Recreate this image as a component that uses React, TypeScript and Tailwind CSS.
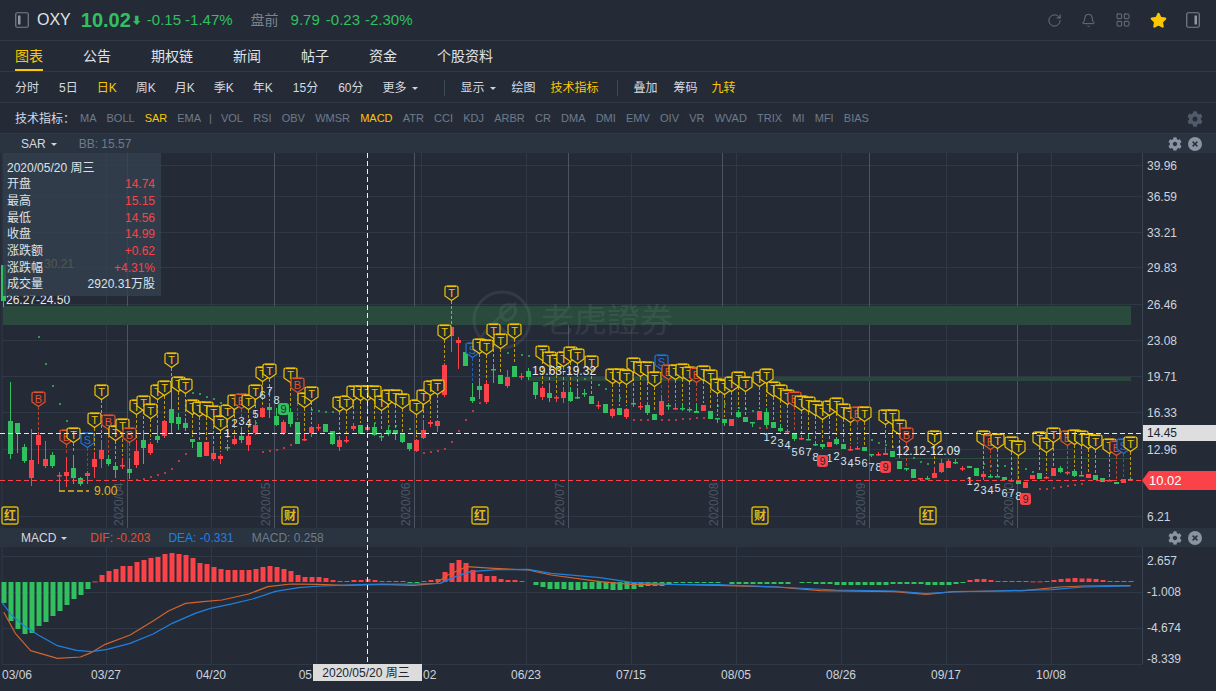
import { Bell, LayoutGrid, RotateCw, Star } from "lucide-react"
import { FaCog } from "react-icons/fa"

const FONT = "'Liberation Sans','Noto Sans CJK SC',sans-serif"
const RED = "#fb4248"
const GREEN = "#31c05f"

// [green, bodyTop, bodyBottom, wickTop, wickBottom], one per trading day, x = 10 + 7i
const candles: number[][] = [
    [1,421,454,382,459],[1,423,433,423,453],[1,447,461,444,463],[0,460,478,429,486],[0,435,445,432,464],[0,459,466,441,468],[1,455,466,452,468],[0,475,475,472,491],[0,472,476,457,487],[1,468,478,455,484],
    [1,478,484,477,486],[0,473,476,471,484],[0,459,467,452,478],[0,450,459,440,468],[1,459,464,455,466],[1,466,470,462,478],[0,465,465,458,469],[1,469,473,458,479],[0,451,465,440,468],[1,440,448,430,464],
    [0,444,453,442,455],[1,436,440,425,443],[0,421,436,420,438],[1,409,423,383,434],[1,417,424,413,430],[1,423,428,418,431],[1,439,442,439,448],[1,442,457,442,457],[0,442,456,442,456],[0,453,459,446,461],
    [0,456,459,454,464],[1,447,447,444,451],[0,439,444,435,445],[1,436,440,427,443],[0,436,445,434,451],[0,425,433,420,435],[0,408,417,407,418],[1,407,410,403,418],[1,416,425,408,426],[0,422,433,420,435],
    [1,412,424,408,427],[1,422,444,422,444],[0,439,439,433,441],[0,427,433,426,437],[0,427,427,424,431],[1,424,432,424,432],[1,431,444,431,445],[0,440,447,436,451],[0,440,440,436,443],[0,426,429,423,431],
    [1,425,434,425,434],[0,427,430,423,432],[1,427,435,423,436],[1,436,436,433,441],[1,430,434,427,436],[1,430,434,430,440],[1,434,442,434,443],[1,443,449,443,451],[0,440,451,439,452],[0,430,438,420,439],
    [0,422,424,420,427],[0,421,426,420,432],[0,365,395,363,397],[0,327,336,327,352],[0,340,343,337,369],[1,352,366,352,366],[1,397,401,383,403],[1,386,390,378,399],[0,384,402,380,404],[1,369,369,364,383],
    [1,375,384,375,384],[0,377,386,370,388],[1,366,377,366,377],[0,376,376,373,380],[1,371,377,368,380],[1,382,395,382,399],[0,388,397,386,400],[1,393,398,383,402],[0,397,397,395,402],[0,392,398,387,403],
    [1,392,401,387,402],[1,397,397,388,399],[1,393,393,389,397],[1,396,404,396,404],[0,405,405,401,409],[1,404,413,404,413],[0,409,416,408,418],[1,408,415,408,415],[0,409,417,408,419],[1,403,403,398,407],
    [0,406,406,402,410],[1,405,413,402,415],[1,414,420,414,420],[0,401,415,395,416],[1,405,405,403,410],[0,408,408,403,410],[1,408,408,403,411],[1,409,409,407,412],[1,411,413,403,413],[0,405,411,405,411],
    [1,411,419,411,419],[1,418,418,418,423],[1,419,423,419,426],[0,419,426,419,426],[1,412,417,410,418],[1,417,422,417,422],[1,422,422,422,427],[0,411,420,411,420],[1,412,425,408,427],[1,422,428,422,428],
    [1,428,431,424,432],[0,431,431,429,433],[1,433,439,433,441],[0,438,438,435,440],[1,439,439,433,440],[1,444,444,441,446],[1,444,447,444,449],[0,442,447,442,447],[1,439,444,437,445],[1,444,449,444,449],
    [0,449,449,446,451],[0,448,448,446,450],[1,447,451,447,451],[1,454,454,454,457],[0,454,454,452,456],[0,453,455,447,455],[1,451,457,451,457],[1,461,469,461,469],[1,468,468,468,471],[1,469,478,469,478],
    [0,478,478,478,481],[1,478,478,476,480],[0,473,478,467,478],[0,463,472,459,473],[0,461,468,459,468],[1,462,462,459,464],[0,468,468,466,471],[1,466,468,466,468],[1,468,476,468,476],[0,474,477,471,480],
    [1,476,476,474,478],[1,476,476,474,477],[1,477,480,477,480],[0,480,480,478,482],[1,481,484,481,484],[0,482,488,482,488],[0,475,479,475,479],[1,473,479,473,479],[0,477,477,476,479],[0,468,476,468,476],
    [1,468,472,466,473],[0,472,472,471,475],[1,471,476,469,477],[1,475,475,471,476],[0,474,478,474,478],[1,475,480,475,480],[1,478,482,478,482],[0,480,480,479,481],[1,482,484,482,484],[0,479,483,479,483],
    [1,479,479,477,480],
]

type Mark = [string, number, number]
const marks: Mark[] = [
    ["B",38,399],["B",66,437],["T",73,435],["S",87,440],["T",94,420],["T",101,392],["B",108,422],["T",115,433],["T",122,426],["B",129,435],["T",136,407],["T",143,403],["T",150,411],["T",157,392],["T",164,388],["T",171,360],["T",178,384],["T",185,386],["T",192,407],["T",199,409],["T",206,409],["T",213,413],["T",220,423],["T",227,412],["T",234,402],["B",241,401],["T",248,402],["T",255,392],["T",262,374],["T",269,371],["T",290,375],["B",297,385],
    ["T",304,400],["T",311,394],["T",339,404],["T",346,403],["T",353,393],["T",360,393],["T",367,393],["T",374,393],["T",381,403],["T",388,397],["T",395,397],["T",402,401],["T",416,407],["T",423,397],["T",430,388],["T",437,387],["T",444,332],["T",451,293],["S",472,350],["T",479,346],["T",486,347],["T",493,331],["T",500,341],["T",514,331],["T",542,353],["T",549,359],["T",556,362],["T",563,359],["T",570,354],["T",577,356],["T",591,363],
    ["T",612,376],["T",619,376],["T",626,377],["T",633,365],["T",640,369],["T",647,369],["T",654,379],["S",661,362],["B",668,372],["T",675,372],["T",682,371],["T",689,374],["B",696,375],["T",703,373],["T",710,377],["T",717,386],["T",724,387],["T",731,384],["T",738,379],["T",745,384],["T",759,379],["T",766,376],["T",773,389],["T",780,392],["T",787,397],["B",794,399],["T",801,403],["T",808,404],["T",815,408],["T",822,412],["T",829,408],["T",836,405],["T",843,411],["T",850,415],["B",857,414],["T",864,414],["T",885,417],["T",892,417],["T",899,427],["B",906,435],
    ["T",934,438],["T",983,438],["B",990,442],["T",997,441],["T",1011,444],["T",1018,448],["T",1039,439],["T",1046,445],["T",1053,435],["B",1067,438],["T",1074,437],["T",1081,438],["T",1088,441],["T",1095,442],["T",1109,446],["B",1116,448],["S",1123,446],["T",1130,444],
]

const digits: [string, number, number][] = [
    ["1",227,433],["2",234,423],["3",241,421],["4",248,423],["5",255,414],["6",262,395],["7",269,391],["8",276,400],
    ["1",766,437],["2",773,440],["3",780,443],["4",787,445],["5",794,452],["6",801,451],["7",808,452],["8",815,457],["1",829,458],["2",836,456],["3",843,461],["4",850,463],["5",857,461],["6",864,463],["7",871,467],["8",878,467],
    ["1",969,481],["2",976,487],["3",983,490],["4",990,490],["5",997,488],["6",1004,493],["7",1011,493],["8",1018,496],
]
const badges: [string, number, number][] = [[GREEN,283,409],[RED,822,461],[RED,885,467],[RED,1025,499]]

const redDots = [[136,479],[143,478],[150,476],[157,474],[164,472],[171,468],[178,460],[185,453],[262,451],[269,450],[276,449],[283,447],[290,444],[423,452],[430,451],[437,450],[444,448],[451,441],[458,430],[465,419],[472,410],[479,402],[633,419],[640,419],[647,419],[661,419],[668,419],[675,419],[682,418],[689,418],[696,417],[703,417],[759,427],[766,427],[1039,488],[1046,488],[1053,487],[1060,486],[1067,485],[1074,484],[1081,483]]
const greenDots = [[38,336],[45,363],[52,385],[59,403],[66,420],[192,392],[199,393],[206,396],[213,398],[220,402],[255,422],[311,409],[318,410],[325,411],[332,411],[374,422],[388,425],[395,425],[409,428],[507,352],[521,354],[528,355],[584,378],[598,384],[605,388],[619,397],[717,405],[724,403],[738,407],[745,408],[752,410],[871,439],[878,442],[885,444],[892,446],[913,457],[920,461],[927,463],[983,463],[990,465],[997,465],[1004,465],[1011,468],[1025,468],[1032,471]]

const macdBars = [-21,-39,-47,-52,-51,-44,-40,-34,-29,-23,-17,-13,-7,0.6,7,11,13,16,16,20,22,24,25,28,29,28,27,24,19,18,15,13,12,12,12,12,13,15,16,15,13,11,7,5,5,5,4,2,1,1,2,2,3,2,1,1,1,1,-1,-1,1,2,3,10,19,22,19,12,8,6,6,3,2,2,1,0,-3,-5,-7,-7,-7,-8,-8,-7,-7,-7,-7,-8,-8,-7,-7,-5,-4,-4,-4,-2,-1,-1,-1,-1,-1,-1,-1,0,-2,-2,-2,-2,-2,-2,-2,-2,-2,0,-1,-1,-2,-2,-2,-3,-3,-3,-3,-3,-3,-3,-3,-2,-2,-2,-2,-2,-3,-3,-3,-3,-2,-1,2,3,3,2,1,1,1,1,1,0.6,0.6,1,2,3,3.5,4,3.5,3.5,3,2,1,1,1,1]

const pts = (a: number[][], ox: number, sx: number) => a.map(([x, y]) => `${ox + x / sx},${525 + y / 3}`).join(" ")
const blueA = [[5,232],[30,270],[60,300],[100,330],[150,362],[200,376],[240,380],[280,373],[340,355],[400,327],[450,295],[510,265],[550,250],[600,238],[660,222],[720,199],[780,188],[840,183],[960,178],[1080,177],[1150,175],[1190,155],[1230,140],[1300,134],[1380,133],[1440,145],[1568,158]]
const blueB = [[0,158],[80,172],[180,178],[300,179],[450,186],[600,195],[750,198],[830,206],[890,201],[1000,198],[1150,194],[1230,186],[1350,183]]
const orangeA = [[10,262],[40,325],[80,377],[150,400],[210,396],[240,382],[275,358],[340,330],[400,288],[440,258],[485,235],[530,230],[580,225],[650,207],[700,185],[760,177],[830,178],[900,181],[1000,178],[1080,181],[1140,175],[1170,150],[1220,125],[1290,130],[1380,135],[1440,150],[1568,170]]
const orangeB = [[0,170],[80,178],[180,178],[300,181],[450,186],[560,197],[750,200],[830,208],[900,200],[1080,197],[1170,186],[1230,183],[1350,182]]

const dateLines = [106, 211, 316, 421, 526, 631, 736, 841, 946, 1051]
const months: [string, number][] = [["2020/04",127],["2020/05",274],["2020/06",414],["2020/07",568],["2020/08",722],["2020/09",869],["2020/10",1017]]
const priceAxis: [string, number][] = [["39.96",165],["36.59",196],["33.21",232],["29.83",267],["26.46",304],["23.08",340],["19.71",376],["16.33",412],["12.96",449],["6.21",516]]

const markColor: Record<string, string> = { T: "#f0c400", B: "#e5512c", S: "#1f73d8" }

function Marker({ kind, x, y }: { kind: string; x: number; y: number }) {
    const c = markColor[kind]
    const candle = candles[Math.round((x - 10) / 7)]
    return (
        <g>
            <line x1={x + 0.5} x2={x + 0.5} y1={y + 8} y2={candle ? candle[3] - 2 : y + 20} stroke={c} strokeOpacity={0.75} strokeDasharray="3 2" />
            <g transform={`translate(${x + 0.5} ${y})`}>
                <path d="M-6.5,-5 Q-6.5,-7 -4.5,-7 H4.5 Q6.5,-7 6.5,-5 V3 L0,7.5 L-6.5,3 Z" fill="#242b37" stroke={c} strokeWidth={1.2} />
                <line x1={-4.5} x2={4.5} y1={-6.6} y2={-6.6} stroke={c} strokeWidth={1.4} />
                <text y={4} textAnchor="middle" fontSize={11} fill={c}>{kind}</text>
            </g>
        </g>
    )
}

function Calendar({ text, x }: { text: string; x: number }) {
    return (
        <g>
            <rect x={x - 8} y={507} width={16} height={17} rx={2} fill="#242b37" stroke="#d8b400" strokeWidth={1.4} />
            <text x={x} y={520} textAnchor="middle" fontSize={12} fontWeight={700} fill="#e0b820">{text}</text>
        </g>
    )
}

function PriceChart() {
    return (
        <svg className="block" width={1216} height={375} viewBox="0 153 1216 375" style={{ fontFamily: FONT }}>
            {priceAxis.map(([, y]) => <line key={y} x1={2} x2={1143} y1={y + 0.5} y2={y + 0.5} stroke="#2f3946" />)}
            <line x1={2} x2={2} y1={153} y2={528} stroke="#2f3946" />
            {dateLines.map((x) => <line key={x} x1={x + 0.5} x2={x + 0.5} y1={153} y2={528} stroke="#2f3946" />)}
            {months.map(([m, x]) => (
                <g key={m}>
                    <line x1={x + 0.5} x2={x + 0.5} y1={153} y2={528} stroke="#4a5462" />
                    <text transform={`translate(${x - 4} 526) rotate(-90)`} fontSize={12} fill="#4b5563">{m}</text>
                </g>
            ))}
            <line x1={1142.5} x2={1142.5} y1={153} y2={528} stroke="#3a4451" />

            <rect x={3} y={306} width={1128} height={19} fill="#294a3c" />
            <rect x={528} y={377} width={603} height={4} fill="#29483b" />
            <rect x={895} y={458} width={236} height={1} fill="#2f4a3e" />

            {/* watermark */}
            <g opacity={0.08} stroke="#dfe5ec" fill="none">
                <circle cx={502} cy={320} r={28} strokeWidth={3} />
                <path d="M480,338 C488,328 500,316 516,303 M502,317 C498,310 503,303 512,305 C518,308 516,317 508,320 C505,321 503,319 502,317 M495,322 C500,328 510,336 516,341" strokeWidth={3} />
                <text x={541} y={332} fontSize={33} fill="#dfe5ec" stroke="none">老虎證券</text>
            </g>

            <text x={44} y={268} fontSize={12} fill="#c9b040">30.21</text>
            <rect x={1} y={265} width={5} height={36} fill={GREEN} />
            <line x1={3.5} x2={3.5} y1={300} y2={307} stroke={GREEN} />

            {greenDots.map(([x, y]) => <rect key={`g${x}`} x={x} y={y} width={2} height={2} fill="#2b9a50" />)}
            {redDots.map(([x, y]) => <rect key={`r${x}`} x={x} y={y} width={2} height={2} fill="#b93a40" />)}

            {candles.map((c, i) => {
                const x = 10 + 7 * i
                const color = c[0] ? GREEN : RED
                const doji = c[1] === c[2]
                return (
                    <g key={x}>
                        <rect x={x} y={c[3]} width={1} height={c[4] - c[3]} fill={color} />
                        <rect x={x - 2} y={c[1]} width={5} height={doji ? 1.5 : c[2] - c[1]} fill={color} />
                    </g>
                )
            })}

            <line x1={59} x2={89} y1={491} y2={491} stroke="#e0b820" strokeWidth={1.5} strokeDasharray="6 3" />
            <text x={94} y={495} fontSize={12} fill="#e0b820">9.00</text>

            {marks.map(([k, x, y]) => <Marker key={`${k}${x}`} kind={k} x={x} y={y} />)}

            {digits.map(([d, x, y], i) => <text key={i} x={x + 0.5} y={y + 4} textAnchor="middle" fontSize={11} fill="#d5e2ee">{d}</text>)}
            {badges.map(([c, x, y]) => (
                <g key={x}>
                    <rect x={x - 5} y={y - 6} width={11} height={12} rx={3} fill={c} />
                    <text x={x + 0.5} y={y + 4} textAnchor="middle" fontSize={11} fill="#242b37">9</text>
                </g>
            ))}

            <text x={532} y={375} fontSize={12} fill="#e3e8ee">19.63-19.32</text>
            <text x={896} y={455} fontSize={12} fill="#e3e8ee">12.12-12.09</text>
            <text x={6} y={304} fontSize={12} fill="#e3e8ee">26.27-24.50</text>

            <Calendar text="红" x={10} />
            <Calendar text="财" x={290} />
            <Calendar text="红" x={480} />
            <Calendar text="财" x={760} />
            <Calendar text="红" x={928} />

            <line x1={0} x2={1143} y1={433.5} y2={433.5} stroke="#e8e8e8" strokeDasharray="5 3" />
            <line x1={0} x2={1143} y1={480.5} y2={480.5} stroke={RED} strokeDasharray="5 3" />

            {priceAxis.map(([t, y]) => <text key={t} x={1147} y={y + 5} fontSize={12} fill="#cdd3da">{t}</text>)}
            <rect x={1143} y={425} width={73} height={16} fill="#dedede" />
            <text x={1147} y={437} fontSize={12} fill="#1c222b">14.45</text>
            <polygon points="1142,480.5 1149,471 1216,471 1216,490 1149,490" fill={RED} />
            <text x={1149} y={485} fontSize={13} fill="#ffffff">10.02</text>
        </svg>
    )
}

function MacdChart() {
    const axis: [string, number][] = [["2.657",561],["-1.008",592],["-4.674",628],["-8.339",659]]
    const dates: [string, number][] = [["03/27",106],["04/20",211],["06/23",526],["07/15",631],["08/05",736],["08/26",841],["09/17",946],["10/08",1051]]
    return (
        <svg className="block" width={1216} height={144} viewBox="0 547 1216 144" style={{ fontFamily: FONT }}>
            {[556, 592, 628, 664].map((y) => <line key={y} x1={2} x2={1143} y1={y + 0.5} y2={y + 0.5} stroke="#2f3946" />)}
            <line x1={2} x2={2} y1={547} y2={664} stroke="#2f3946" />
            {dateLines.map((x) => <line key={x} x1={x + 0.5} x2={x + 0.5} y1={547} y2={664} stroke="#2f3946" />)}
            <line x1={1142.5} x2={1142.5} y1={547} y2={664} stroke="#3a4451" />

            {macdBars.map((v, i) => {
                if (v === 0) return null
                const h = Math.abs(v)
                return <rect key={i} x={1.5 + 7 * i} y={v > 0 ? 582 - h : 582} width={5} height={h < 1 ? 1 : h} fill={v > 0 ? RED : GREEN} />
            })}

            <polyline points={pts(orangeA, 0, 2.613)} fill="none" stroke="#d2642c" strokeWidth={1.2} strokeLinejoin="round" />
            <polyline points={pts(orangeB, 600, 2.545)} fill="none" stroke="#d2642c" strokeWidth={1.2} strokeLinejoin="round" />
            <polyline points={pts(blueA, 0, 2.613)} fill="none" stroke="#2080e0" strokeWidth={1.2} strokeLinejoin="round" />
            <polyline points={pts(blueB, 600, 2.545)} fill="none" stroke="#2080e0" strokeWidth={1.2} strokeLinejoin="round" />

            {axis.map(([t, y]) => <text key={t} x={1147} y={y + 4} fontSize={12} fill="#cdd3da">{t}</text>)}
            <text x={2} y={679} fontSize={12} fill="#cdd3da">03/06</text>
            {dates.map(([t, x]) => <text key={t} x={x} y={679} textAnchor="middle" fontSize={12} fill="#cdd3da">{t}</text>)}
            {/* 05/12 and 06/02 sit half under the crosshair's date tag */}
            <text x={312} y={679} textAnchor="end" fontSize={12} fill="#cdd3da">05</text>
            <text x={423} y={679} fontSize={12} fill="#cdd3da">02</text>
        </svg>
    )
}

function CloseDot() {
    return (
        <svg width={14} height={14} viewBox="0 0 14 14">
            <circle cx={7} cy={7} r={7} fill="#8a93a0" />
            <path d="M4.6 4.6 L9.4 9.4 M9.4 4.6 L4.6 9.4" stroke="#2a3340" strokeWidth={1.5} />
        </svg>
    )
}

function PanelIcon({ right }: { right?: boolean }) {
    return (
        <svg width={14} height={16} viewBox="0 0 14 16" fill="none">
            <rect x={0.75} y={0.75} width={12.5} height={14.5} rx={1.5} stroke="#77818e" strokeWidth={1.2} />
            <rect x={right ? 8.5 : 3} y={3.5} width={2.5} height={9} fill="#8f98a4" />
        </svg>
    )
}

function Caret() {
    return <span className="ml-[5px] inline-block h-0 w-0 border-x-[3px] border-t-[3px] border-x-transparent border-t-[#cdd3da] align-middle" />
}

const indicatorsA = ["MA", "BOLL", "SAR", "EMA"]
const indicatorsB = ["VOL", "RSI", "OBV", "WMSR", "MACD", "ATR", "CCI", "KDJ", "ARBR", "CR", "DMA", "DMI", "EMV", "OIV", "VR", "WVAD", "TRIX", "MI", "MFI", "BIAS"]
const tabs = ["公告", "期权链", "新闻", "帖子", "资金", "个股资料"]
const quote: [string, string][] = [["开盘","14.74"],["最高","15.15"],["最低","14.56"],["收盘","14.99"],["涨跌额","+0.62"],["涨跌幅","+4.31%"]]

export default function App() {
    return (
        <div className="relative h-[691px] w-[1216px] overflow-hidden bg-[#242b37] text-[12px] text-[#d5dae0] [font-family:'Liberation_Sans','Noto_Sans_CJK_SC',sans-serif]">
            {/* Quote header */}
            <div className="flex h-[41px] items-center border-b border-[#2f3a47] pl-[15px] pr-[16px]">
                <PanelIcon />
                <span className="ml-2 text-[16px] text-[#dfe3e8]">OXY</span>
                <span className="ml-[10px] text-[20px] font-bold text-[#31c05f]">10.02</span>
                <span className="ml-[1px] text-[10px] text-[#31c05f]">⬇</span>
                <span className="ml-[5px] text-[15px] text-[#31c05f]">-0.15</span>
                <span className="ml-[4px] text-[15px] text-[#31c05f]">-1.47%</span>
                <span className="ml-[18px] text-[14px] text-[#7a8592]">盘前</span>
                <span className="ml-3 text-[15px] text-[#31c05f]">9.79</span>
                <span className="ml-[6px] text-[15px] text-[#31c05f]">-0.23</span>
                <span className="ml-[5px] text-[15px] text-[#31c05f]">-2.30%</span>
                <div className="ml-auto flex items-center gap-[19px] text-[#6d7784]">
                    <RotateCw size={15} strokeWidth={1.5} />
                    <Bell size={15} strokeWidth={1.5} />
                    <LayoutGrid size={16} strokeWidth={1.4} />
                    <Star size={17} fill="#fcc800" stroke="#fcc800" />
                    <PanelIcon right />
                </div>
            </div>

            {/* Tabs */}
            <div className="flex h-[31px] items-stretch gap-10 border-b border-[#2f3a47] pl-[15px] text-[14px] text-[#dfe3e8]">
                <span className="flex items-center border-b-2 border-[#fcc800] pt-[2px] text-[#fcc800]">图表</span>
                {tabs.map((t) => <span key={t} className="flex items-center">{t}</span>)}
            </div>

            {/* Periods */}
            <div className="flex h-[31px] items-center gap-[19px] border-b border-[#2f3a47] pl-[15px] pt-[1px]">
                <span className="mr-[1px]">分时</span>
                <span>5日</span>
                <span className="text-[#fcc800]">日K</span>
                <span>周K</span>
                <span>月K</span>
                <span>季K</span>
                <span>年K</span>
                <span className="ml-[1px]">15分</span>
                <span className="ml-[1px]">60分</span>
                <span>更多<Caret /></span>
                <span className="ml-[7px] h-[16px] w-px bg-[#3f4a57]" />
                <span className="-ml-[3px]">显示<Caret /></span>
                <span className="-ml-[3px]">绘图</span>
                <span className="-ml-[4px] text-[#fcc800]">技术指标</span>
                <span className="-ml-[1px] h-[16px] w-px bg-[#3f4a57]" />
                <span className="-ml-[3px]">叠加</span>
                <span className="-ml-[3px]">筹码</span>
                <span className="-ml-[5px] text-[#fcc800]">九转</span>
            </div>

            {/* Indicator list */}
            <div className="flex h-[31px] items-center gap-[10px] border-b border-[#2f3a47] pl-[15px] pr-[13px] pt-[1px] text-[11px] text-[#6f7b8a]">
                <span className="mr-[-5px] w-[60px] text-[12px] text-[#d5dae0]">技术指标：</span>
                {indicatorsA.map((t) => <span key={t} className={t === "SAR" ? "text-[#fcc800]" : ""}>{t}</span>)}
                <span className="-ml-[2px]">|</span>
                <span className="-ml-[1px] flex gap-[10.2px]">
                    {indicatorsB.map((t) => <span key={t} className={t === "MACD" ? "text-[#fcc800]" : ""}>{t}</span>)}
                </span>
                <FaCog size={16} className="ml-auto text-[#505a68]" />
            </div>

            {/* SAR panel */}
            <div className="flex h-[19px] items-center bg-[#2a3340] pl-[21px] pr-[14px]">
                <span>SAR<Caret /></span>
                <span className="ml-[22px] text-[#6f7b8a]">BB: 15.57</span>
                <FaCog size={14} className="ml-auto mr-[6px] text-[#8a93a0]" />
                <CloseDot />
            </div>
            <div className="relative">
                <PriceChart />
                <div className="absolute left-[3px] top-0 flex h-[143px] w-[158px] flex-col bg-[#33414f]/80 pl-[4px] pr-[6px] pt-[7px] text-[#dde2e8]">
                    <div className="h-[16px] leading-[16px]">2020/05/20 周三</div>
                    {quote.map(([k, v]) => (
                        <div key={k} className="flex h-[16.7px] items-center justify-between">
                            <span>{k}</span>
                            <span className="text-[#fb4248]">{v}</span>
                        </div>
                    ))}
                    <div className="flex h-[16.7px] items-center justify-between">
                        <span>成交量</span>
                        <span>2920.31万股</span>
                    </div>
                </div>
            </div>

            {/* MACD panel */}
            <div className="flex h-[19px] items-center bg-[#2a3340] pl-[21px] pr-[14px]">
                <span>MACD<Caret /></span>
                <span className="ml-[23px] text-[#e5512c]">DIF: -0.203</span>
                <span className="ml-[18px] text-[#2080e0]">DEA: -0.331</span>
                <span className="ml-[18px] text-[#6f7b8a]">MACD: 0.258</span>
                <FaCog size={14} className="ml-auto mr-[6px] text-[#8a93a0]" />
                <CloseDot />
            </div>
            <MacdChart />

            {/* Crosshair + date tag */}
            <div className="absolute left-[367px] top-[153px] h-[511px] w-px bg-[repeating-linear-gradient(to_bottom,#f0f0f0_0_5px,transparent_5px_8px)]" />
            <div className="absolute left-[313px] top-[664px] flex h-[17px] w-[109px] items-center justify-center bg-[#dcdcdc] pr-[3px] text-[#20262e]">2020/05/20 周三</div>
        </div>
    )
}
